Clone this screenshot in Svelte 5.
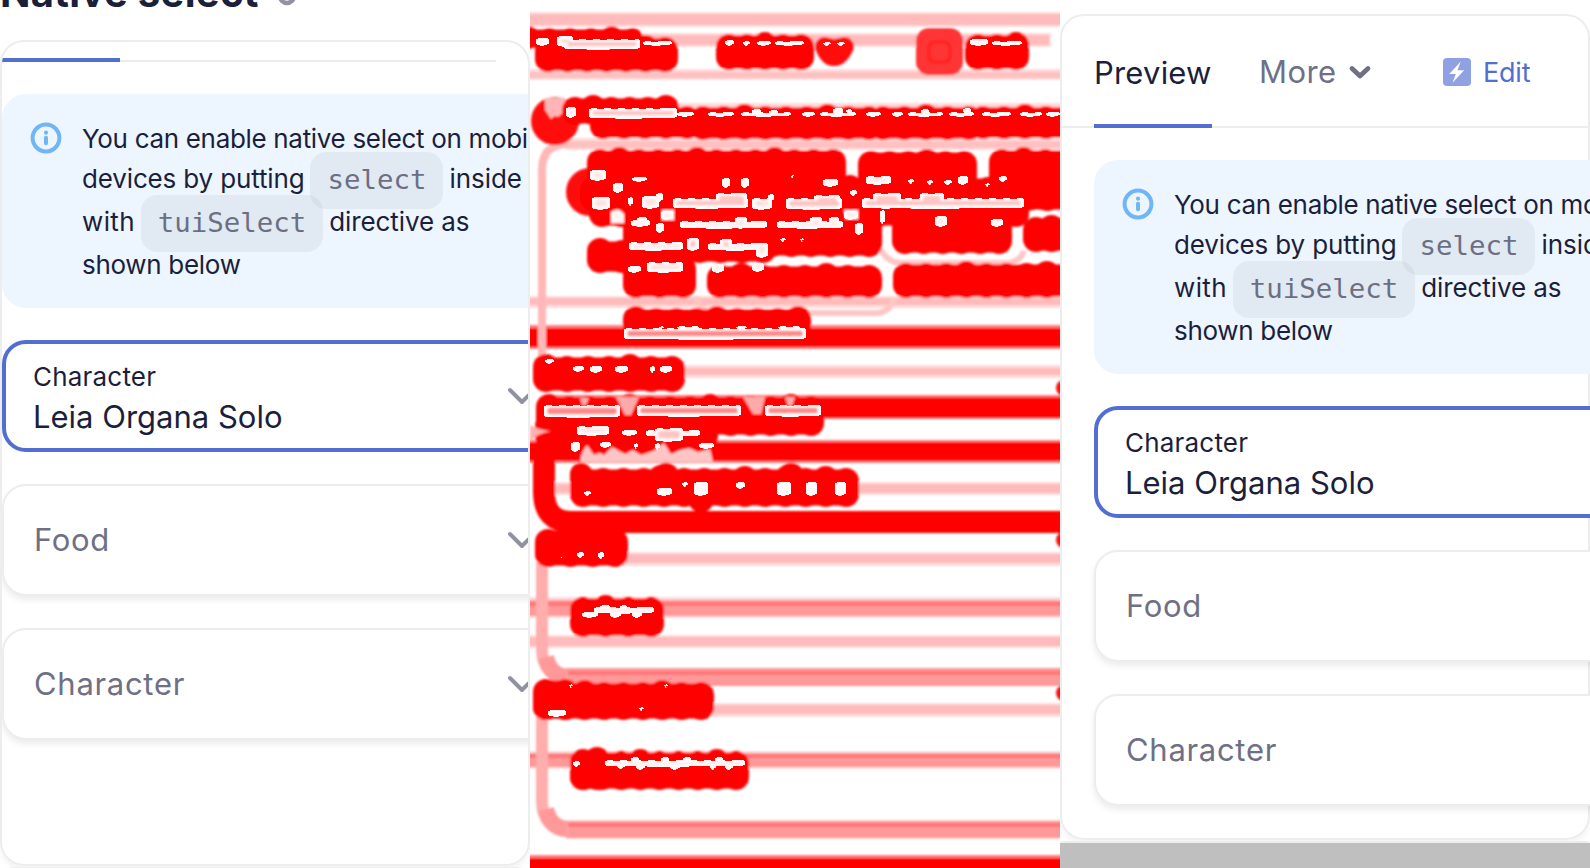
<script>
  const fields = [
    { label: 'Character', value: 'Leia Organa Solo' },
    { label: 'Food' },
    { label: 'Character' },
  ];

  // Horizontal bands of the difference map: x, y, width, height, colour.
  const pale = '#ffbbbb';
  const soft = '#ffdada';
  const bands = [
    [-5, 12, 540, 15, soft], [-5, 14, 540, 11, pale],
    [100, 33, 421, 14, soft], [100, 35, 419, 10, pale],
    [-5, 69, 540, 11, soft], [-5, 72, 540, 6, '#ffc0c0'],
    [140, 103, 395, 5, soft],
    [36, 138, 499, 12, soft], [36, 141, 499, 7, '#ffc0c0'],
    [-5, 296, 540, 12, soft], [-5, 298, 540, 7, pale],
    [-5, 325, 540, 24, '#ff7f7f'], [-5, 328, 540, 19, '#ff0000'],
    [150, 365, 385, 13, soft], [150, 368, 385, 7, pale],
    [12, 395, 523, 24, '#ff7f7f'], [12, 397, 523, 21, '#ff2020'], [150, 399, 385, 18, '#ff0505'],
    [-5, 440, 540, 23, '#ff7f7f'], [-5, 442, 540, 19, '#ff0505'],
    [24, 482, 511, 13, soft], [24, 484, 511, 9, pale],
    [90, 552, 445, 14, soft], [90, 554, 445, 9, pale],
    [-5, 597, 540, 21, soft], [-5, 600, 540, 16, '#ff9999'], [-5, 602, 540, 4, '#ff7777'],
    [-5, 635, 540, 13, soft], [-5, 637, 540, 9, pale],
    [36, 668, 499, 18, '#ff9999'], [36, 671, 499, 4, '#ff7777'],
    [180, 703, 355, 14, soft], [180, 705, 355, 9, pale],
    [-5, 751, 540, 18, soft], [-5, 753, 540, 14, '#ff9999'], [-5, 754, 540, 4, '#ff7777'],
    [36, 820, 499, 19, soft], [36, 821, 499, 17, '#ff9999'], [36, 823, 499, 4, '#ff7777'],
    [-5, 855, 540, 18, '#ff7f7f'], [-5, 858, 540, 15, '#ff0505'],
  ];

  // Changed text areas: left, right, top, bottom.
  const rows = [
    [-12, 113, 28, 49], [5, 148, 37, 72],
    [186, 284, 34, 70], [435, 499, 34, 70],
    [32, 149, 97, 125], [60, 170, 106, 139], [160, 352, 106, 140], [340, 452, 106, 140], [440, 550, 106, 139],
    [57, 316, 149, 186], [328, 447, 151, 190], [459, 550, 149, 190],
    [50, 550, 177, 211], [59, 499, 188, 227],
    [57, 105, 240, 273], [93, 352, 207, 257], [93, 246, 230, 263], [362, 482, 215, 254], [493, 550, 217, 252],
    [93, 166, 258, 298], [177, 352, 265, 298], [363, 550, 263, 298], [93, 281, 308, 340],
    [3, 155, 356, 392],
    [6, 294, 396, 436], [5, 188, 413, 449],
    [40, 329, 468, 507], [40, 62, 465, 500], [118, 149, 465, 500], [245, 274, 465, 500], [158, 184, 480, 512],
    [5, 98, 529, 567], [40, 134, 597, 637],
    [3, 184, 682, 720], [3, 48, 679, 720],
    [40, 219, 751, 790], [40, 80, 749, 790],
  ];

  function blob([left, right, top, bottom]) {
    const radius = Math.min(13, (bottom - top) / 2, (right - left) / 2);
    const shapes = [];
    const count = Math.max(1, Math.round((right - left - 2 * radius) / 20));
    for (let i = 0; i <= count; i++) {
      const x = left + radius + ((right - left - 2 * radius) * i) / count;
      const lift = (i * 7 + Math.round(top)) % 4 === 0 ? 2 : 0;
      shapes.push({ x, y: top + radius - lift, h: bottom - top - 2 * radius + lift });
    }
    return { left, right, top, bottom, radius, shapes };
  }
  const blobs = rows.map(blob);

  // Gaps left where both versions overlap: x, y, width, height, strength of the pink core.
  const gaps = [
    [6, 38, 13, 7, 1], [27, 36, 16, 10, 1], [34, 39, 76, 10, 2], [113, 41, 29, 4, 0],
    [195, 40, 9, 5, 0], [213, 41, 7, 4, 0], [227, 41, 14, 4, 0], [245, 41, 29, 4, 0],
    [293, 42, 8, 3, 0], [307, 42, 8, 3, 0], [440, 39, 18, 6, 1], [462, 41, 30, 4, 0],
    [36, 107, 10, 10, 1], [59, 108, 88, 10, 2], [147, 112, 17, 4, 0], [178, 112, 26, 4, 0],
    [211, 112, 50, 4, 0], [222, 109, 9, 5, 0], [239, 110, 9, 4, 0], [272, 112, 13, 4, 0],
    [290, 112, 36, 4, 0], [303, 108, 10, 6, 0], [316, 109, 6, 4, 0], [336, 112, 15, 4, 0],
    [362, 112, 11, 4, 0], [378, 112, 35, 4, 0], [391, 109, 8, 5, 0], [419, 112, 25, 4, 0],
    [433, 108, 8, 5, 0], [452, 112, 29, 4, 0], [490, 112, 22, 4, 0], [516, 112, 14, 4, 0],
    [60, 170, 16, 10, 1], [102, 177, 15, 4, 0], [83, 183, 10, 9, 1], [192, 178, 8, 9, 1], [211, 178, 8, 9, 1],
    [260, 175, 5, 2, 0], [293, 179, 15, 7, 1], [336, 176, 25, 8, 1], [378, 179, 6, 4, 0],
    [397, 180, 6, 4, 0], [414, 180, 8, 4, 0], [428, 176, 10, 8, 1], [469, 176, 8, 5, 0], [455, 183, 5, 3, 0], [320, 190, 7, 5, 0],
    [62, 197, 18, 12, 1], [98, 197, 5, 8, 0], [112, 196, 17, 12, 1], [126, 193, 7, 8, 0], [143, 198, 75, 10, 2], [186, 193, 31, 13, 2],
    [222, 198, 20, 11, 1], [238, 194, 6, 7, 0], [256, 198, 56, 11, 2], [284, 195, 26, 11, 2], [332, 198, 162, 10, 2], [343, 193, 28, 15, 2], [390, 193, 24, 15, 2],
    [131, 211, 12, 8, 1], [314, 211, 14, 8, 1], [350, 210, 5, 13, 0],
    [101, 220, 19, 6, 1], [107, 217, 10, 7, 0], [126, 223, 8, 9, 0], [150, 221, 87, 7, 1], [205, 217, 12, 11, 1],
    [247, 221, 66, 7, 1], [280, 217, 12, 11, 1], [299, 217, 10, 10, 1], [325, 223, 8, 11, 0], [405, 216, 12, 10, 1], [461, 219, 12, 7, 1],
    [99, 242, 54, 8, 1], [157, 238, 12, 12, 2], [178, 243, 60, 7, 1], [190, 239, 12, 10, 2], [226, 243, 12, 14, 1],
    [250, 238, 6, 3, 0], [270, 238, 4, 3, 0], [98, 266, 13, 6, 0], [117, 262, 36, 10, 1], [182, 264, 12, 8, 1], [222, 263, 12, 8, 1],
    [94, 328, 182, 11, 3], [129, 326, 5, 3, 0], [147, 326, 22, 3, 0], [206, 326, 11, 3, 0], [248, 326, 22, 3, 0],
    [15, 359, 9, 4, 0], [43, 366, 11, 5, 0], [60, 366, 12, 6, 0], [85, 366, 13, 6, 0], [120, 366, 5, 6, 0], [130, 366, 12, 6, 0],
    [14, 405, 76, 12, 3], [107, 405, 104, 11, 3], [235, 405, 56, 11, 3],
    [47, 426, 32, 9, 1], [92, 430, 15, 5, 0], [116, 430, 54, 6, 1], [125, 428, 28, 13, 2],
    [41, 442, 9, 9, 0], [70, 442, 11, 5, 0], [104, 443, 4, 5, 0], [125, 443, 5, 6, 0], [169, 443, 15, 5, 0],
    [54, 491, 7, 4, 0], [127, 488, 15, 7, 0], [152, 482, 6, 4, 0], [164, 482, 14, 13, 0], [206, 482, 9, 6, 0],
    [247, 482, 14, 13, 0], [276, 482, 11, 13, 0], [305, 482, 11, 13, 0],
    [30, 555, 3, 2, 0], [47, 552, 7, 5, 0], [68, 552, 6, 6, 0],
    [52, 612, 16, 5, 0], [64, 607, 60, 6, 1], [70, 605, 10, 6, 0], [90, 605, 7, 6, 0], [80, 611, 11, 6, 0], [102, 611, 10, 6, 0],
    [39, 684, 4, 3, 0], [134, 684, 4, 3, 0], [18, 710, 18, 6, 0], [109, 707, 5, 3, 0],
    [43, 761, 7, 5, 0], [75, 760, 140, 6, 1], [101, 757, 8, 5, 0], [131, 757, 8, 5, 0], [153, 757, 8, 5, 0],
    [185, 757, 8, 5, 0], [87, 765, 8, 3, 0], [106, 765, 9, 4, 0], [140, 765, 10, 4, 0], [180, 765, 6, 4, 0], [195, 765, 8, 4, 0],
  ];
  const cores = ['none', '#ffe2e2', '#ffc4c4', '#ff8888'];

  function gapPath([x, y, w, h]) {
    const right = x + w;
    let d = `M${x + 2} ${y}`;
    let up = false;
    for (let px = x + 8; px < right - 3; px += 7) {
      up = !up;
      d += `H${px}v${up ? 1 : -1}`;
    }
    if (up) d += 'v-1';
    return d + `H${right - 1}v1h1V${y + h - 1}h-2v1H${x + w * 0.6}v1H${x + w * 0.3}v-1H${x + 1}v-1h-1V${y + 1}h2Z`;
  }
</script>

{#snippet chevron()}
  <svg class="chevron" width="32" height="32" viewBox="0 0 32 32"><path d="M4 10l12 12 12-12" /></svg>
{/snippet}

{#snippet content()}
  <div class="alert">
    <svg class="info" width="32" height="32" viewBox="0 0 32 32">
      <circle cx="16" cy="16" r="13.4" />
      <path d="M16 15.8v5.5M16 10.6v.1" />
    </svg>
    <div class="copy">
      <div class="line first"><span class="w1">You can enable native select on mobile</span></div>
      <div class="line"><span class="w2">devices by putting</span><code>select</code><span class="w3">inside</span></div>
      <div class="line"><span class="w4">with</span><code>tuiSelect</code><span class="w5">directive as</span></div>
      <div class="line"><span class="w6">shown below</span></div>
    </div>
  </div>
  {#each fields as field}
    <div class="field" class:focused={field.value}>
      <div class="texts">
        {#if field.value}
          <span class="label">{field.label}</span>
          <span class="value">{field.value}</span>
        {:else}
          <span class="placeholder">{field.label}</span>
        {/if}
      </div>
      {@render chevron()}
    </div>
  {/each}
{/snippet}

<main>
  <section class="panel left">
    <h1><span>Native select</span>
      <svg width="20" height="30" viewBox="0 0 20 30"><path d="M3 15v5a7 7 0 0 0 14 0v-5" /></svg>
    </h1>
    <div class="card">
      <div class="tabline"><i></i></div>
      {@render content()}
    </div>
    <div class="next"></div>
  </section>

  <section class="panel diff">
    <svg width="530" height="868" viewBox="0 0 530 868">
      <defs>
        <filter id="soften" x="-10" y="-10" width="550" height="888" filterUnits="userSpaceOnUse"><feGaussianBlur stdDeviation="1.2" /></filter>
      </defs>
      <g filter="url(#soften)">
        {#each bands as [x, y, w, h, fill]}
          <rect {x} {y} width={w} height={h} {fill} />
        {/each}
        <path d="M38 144Q12 144 12 170V362" class="outline" />
        <path d="M12 562V650Q13 677 38 677" class="outline thick" />
        <path d="M12 716V802Q13 829 38 829" class="outline thick" />
        <path d="M16 657Q20 676 37 677M16 809Q20 828 37 829" class="outline corner" />
        <path d="M166 296Q170 313 184 313H346Q360 313 364 298M350 249Q358 263 372 263H478Q490 262 494 251" class="outline chip" />
        <path d="M14 444V492Q14 522 42 522H535" class="heavy" />
        <rect x="386" y="28" width="47" height="47" rx="13" fill="#ff3434" />
        <rect x="399" y="42" width="21" height="20" rx="6" fill="none" stroke="#ff2020" stroke-width="3" />
        <path d="M285 48a10 10 0 0 1 10-11q5 1 9 2 5-1 10-2a10 10 0 0 1 10 11q-7 18-20 18T285 48Z" fill="#ff0808" />
        <circle cx="25" cy="121" r="24" fill="#ff1010" />
        <path d="M15 98h20v13q-5 4-7 6-3-3-7 2-3-5-6-9Z" fill="#ffb5b5" />
        <circle cx="60" cy="192" r="24" fill="#ff0c0c" />
        {#each blobs as b}
          <rect x={b.left + 3} y={b.top + 1.5} width={b.right - b.left - 6} height={b.bottom - b.top - 3} rx={Math.min(10, b.radius)} fill="#ff0606" />
          {#each b.shapes as s}
            <rect x={s.x - b.radius} y={s.y - b.radius} width={b.radius * 2} height={s.h + b.radius * 2} rx={b.radius} fill="#ff0303" />
          {/each}
        {/each}
        <path d="M50 398h9l-3 7h-4ZM86 397h23l-8 18h-6ZM213 397h22l-4 17h-8ZM255 397h10l-3 9h-4Z" fill="#ffaaaa" />
        <path d="M50 462q1-10 7-17l7 10q5-4 10 0l8-8 13 7 8-4 8 5 12-4 11-8 7 11 9-4 9-2 9 4 12-3 3 13Z" fill="#ffc4c4" />
        <path d="M0 425q8 5 21 6-14 2-21 11Z" fill="#ffb0b0" />
        <path d="M81 212q7-6 13 2v9h-13Z" fill="#fff4f4" />
        <path d="M132 210h12v10h-12ZM314 210h14v9h-12Z" fill="#fff4f4" />
        <circle cx="534" cy="388" r="8" fill="#ff1010" />
        <circle cx="534" cy="540" r="8" fill="#ff1010" />
        <circle cx="534" cy="693" r="8" fill="#ff1010" />
      </g>
      {#each gaps as gap}
        <path d={gapPath(gap)} fill="#fff9f9" />
      {/each}
      <g class="cores">
        {#each gaps as [x, y, w, h, core]}
          {#if core}
            <rect x={x + 3.5} y={y + 3} width={Math.max(1, w - 7)} height={Math.max(1, h - 6)} rx="2" fill={cores[core]} />
          {/if}
        {/each}
      </g>
    </svg>
  </section>

  <section class="panel right">
    <div class="card">
      <div class="tabs">
        <span class="tab">Preview</span>
        <span class="more">More</span>
        <svg class="down" width="24" height="24" viewBox="0 0 24 24"><path d="M4 8.5l8 7.5 8-7.5" /></svg>
        <svg class="bolt" width="28" height="28" viewBox="0 0 28 28">
          <rect width="28" height="28" rx="4" />
          <path d="M17.8 3.6L6.2 16h6.6l-3.3 8.8L21.2 12.2h-6.7Z" />
        </svg>
        <span class="edit">Edit</span>
      </div>
      {@render content()}
    </div>
    <div class="next"></div>
    <div class="fill"></div>
  </section>
</main>

<style>
  :global(body) { margin: 0; background: #fff; overflow: hidden; }
  main { display: flex; width: 1590px; height: 868px; overflow: hidden; font-family: Inter, sans-serif; color: #1b1f3b; }
  .panel { width: 530px; height: 868px; flex: none; overflow: hidden; box-sizing: border-box; display: flex; flex-direction: column; }
  span { white-space: nowrap; }
  h1 { margin: -24px 0 0; height: 64px; flex: none; display: flex; font-size: 40px; line-height: 33px; font-weight: 700; }
  h1 span { width: 257px; letter-spacing: 0.3px; }
  h1 svg { margin-left: 20px; fill: none; stroke: #9193a3; stroke-width: 4.5; }
  .card { box-sizing: border-box; border: 2px solid #ededed; border-radius: 24px; flex: none; box-shadow: 0 4px 6px #0000000c; }
  .left .card { height: 826px; overflow: hidden; }
  .tabline { height: 18px; margin: 0 32px 32px 0; border-bottom: 2px solid #ededed; display: flex; align-items: flex-end; }
  .tabline i { width: 118px; height: 4px; margin-bottom: -2px; background: #526ed3; }
  .next { height: 24px; flex: none; border: 2px solid #ededed; border-radius: 24px; margin-top: 1px; }
  .alert { box-sizing: border-box; width: 620px; height: 214px; margin-bottom: 32px; padding: 28px 0 0 28px; border-radius: 24px; background: #edf5ff; display: flex; }
  .info { flex: none; fill: none; stroke: #70b6f6; stroke-width: 4; stroke-linecap: round; }
  .copy { margin-left: 20px; font-size: 26px; }
  .line { height: 43px; display: flex; align-items: center; }
  .line.first { height: 37px; }
  .line span { padding-bottom: 4px; line-height: 32px; }
  .w1 { letter-spacing: -0.32px; }
  .w2 { letter-spacing: -0.15px; }
  .w3 { letter-spacing: -0.05px; }
  .w4 { letter-spacing: 0.35px; }
  .w5 { letter-spacing: -0.1px; }
  .w6 { letter-spacing: -0.3px; }
  code { box-sizing: border-box; height: 57px; margin: 0 6px; padding: 0 17px; border-radius: 16px; background: #a0a8a626; color: #6c6f83; font: 27.4px/55px "DejaVu Sans Mono", monospace; }
  .field { box-sizing: border-box; width: 620px; height: 112px; margin-bottom: 32px; padding: 0 82px 0 30px; border: 2px solid #ededed; border-radius: 24px; background: #fff; box-shadow: 0 4px 6px #00000014; display: flex; align-items: center; justify-content: space-between; }
  .field.focused { border: 4px solid #526ed3; padding: 0 80px 0 27px; box-shadow: none; }
  .texts { display: flex; flex-direction: column; }
  .focused .texts { padding-top: 5px; }
  .label { font-size: 26px; line-height: 36px; letter-spacing: 0.2px; }
  .value { font-size: 31px; line-height: 44px; letter-spacing: 0; }
  .placeholder { font-size: 31px; padding-bottom: 2px; color: #6f7085; letter-spacing: 0.7px; }
  .chevron { flex: none; fill: none; stroke: #9092a2; stroke-width: 4; stroke-linecap: round; stroke-linejoin: round; }
  .diff svg { display: block; }
  .outline { fill: none; stroke: #ffb7b7; stroke-width: 8; }
  .outline.thick { stroke: #ffadad; stroke-width: 12; }
  .outline.corner { stroke: #ff9999; stroke-width: 16; }
  .outline.chip { stroke: #ffc6c6; stroke-width: 6; }
  .heavy { fill: none; stroke: #ff0505; stroke-width: 22; }
  .cores { filter: blur(0.8px); }
  .right { padding-top: 14px; }
  .right .card { height: 826px; }
  .right .alert { margin-left: 32px; }
  .right .field { margin-left: 32px; }
  .right .next { height: 6px; border-bottom: 0; margin-top: 1px; margin-bottom: -6px; }
  .fill { height: 26px; flex: none; background: #bfbfbf; position: relative; }
  .tabs { height: 110px; margin-bottom: 32px; padding: 0 0 0 32px; border-bottom: 2px solid #ededed; display: flex; align-items: center; }
  .tab { box-sizing: border-box; width: 118px; height: 112px; margin-bottom: -2px; border-bottom: 4px solid #526ed3; font-size: 31px; line-height: 113px; letter-spacing: 0.2px; }
  .more { margin: 0 0 0 47px; width: 78px; font-size: 31px; line-height: 113px; color: #6f7085; letter-spacing: 0.4px; }
  .down { margin: 2px 0 0 11px; fill: none; stroke: #6f7085; stroke-width: 4.8; stroke-linecap: round; stroke-linejoin: round; }
  .bolt { margin: 2px 12px 0 71px; }
  .bolt rect { fill: #8fa0e3; }
  .bolt path { fill: #fff; }
  .edit { padding-top: 2px; font-size: 27px; color: #526ed3; letter-spacing: -0.2px; }
</style>
